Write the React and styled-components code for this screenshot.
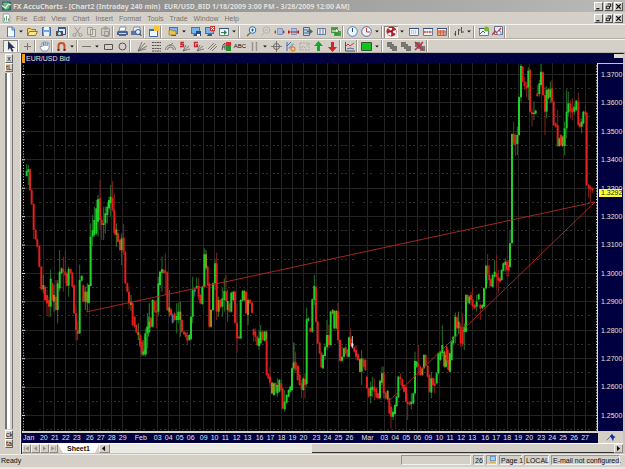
import styled, { createGlobalStyle } from "styled-components";

const GlobalStyle = createGlobalStyle`
    * {
        box-sizing: border-box;
    }
    body {
        margin: 0;
        background-color: #d4d0c8;
        font-family: "Liberation Sans", Arial, sans-serif;
        font-size: 7px;
        line-height: 9px;
        color: #111;
    }
    button {
        font: inherit;
        color: inherit;
        padding: 0;
        border: 0;
        background: none;
    }
`;

const Window = styled.div`
    display: flex;
    flex-direction: column;
    height: 100vh;
    overflow: hidden;
`;

const TitleBar = styled.header`
    display: flex;
    align-items: center;
    gap: 2px;
    height: 12px;
    padding: 0 2px;
    background: linear-gradient(90deg, #858585, #b9b9b7);
    color: #e2dfd8;
`;

const Title = styled.h1`
    flex: 1;
    margin: 0;
    font-family: "Noto Sans", "Liberation Sans", sans-serif;
    font-size: 7px;
    font-weight: bold;
    white-space: pre;
`;

const MenuBar = styled.nav`
    display: flex;
    align-items: center;
    height: 12px;
    padding: 0 2px;
    color: #77746e;
`;

const MenuItems = styled.div`
    display: flex;
    flex: 1;
    gap: 6px;
    padding-left: 5px;
`;

const WindowButtons = styled.div`
    display: flex;
    gap: 1px;
`;

const WindowButton = styled.button`
    width: 9px;
    height: 9px;
    background-color: #d4d0c8;
    border: 1px solid;
    border-color: #fff #555 #555 #fff;
    svg {
        display: block;
        width: 7px;
        height: 7px;
    }
`;

const ToolBar = styled.div`
    display: flex;
    align-items: center;
    height: ${({ $tall }) => ($tall ? "15px" : "14px")};
    padding-left: 3px;
    border-top: 1px solid #f7f5f0;
    border-bottom: 1px solid #b3afa7;
`;

const ToolButton = styled.button`
    display: flex;
    align-items: center;
    justify-content: center;
    flex: none;
    width: ${({ $narrow }) => ($narrow ? "8px" : "14px")};
    height: 12px;
    font-size: 6px;
    background-color: ${({ $pressed }) => ($pressed ? "#efede8" : "transparent")};
    box-shadow: ${({ $pressed }) =>
        $pressed ? "inset 1px 1px #8c8880, inset -1px -1px #fff" : "none"};
    svg {
        width: 11px;
        height: 11px;
    }
`;

const Separator = styled.span`
    flex: none;
    width: ${({ $wide }) => ($wide ? "6px" : "3px")};
    height: 12px;
    background: linear-gradient(90deg, #99958d 1px, #fff 1px, #fff 2px, transparent 2px);
`;

const Workspace = styled.div`
    display: flex;
    flex: 1;
    min-height: 0;
`;

const DockPanel = styled.aside`
    display: flex;
    flex-direction: column;
    width: 22px;
    padding: 1px 8px 6px 5px;
    border-right: 1px solid #222;
    box-shadow: inset -1px 0 #eeece8;
`;

const DockButton = styled.button`
    height: 9px;
    overflow: hidden;
    line-height: 7px;
    background-color: #d4d0c8;
    border: 1px solid;
    border-color: #fff #666 #666 #fff;
`;

const DockList = styled.div`
    flex: 1;
    margin: 1px 0;
    background-color: #d4d0c8;
    border-left: 2px solid #77747a;
    border-right: 1px solid #77747a;
    box-shadow: inset 3px 0 #fff;
`;

const ChartFrame = styled.main`
    display: flex;
    flex-direction: column;
    flex: 1;
    min-width: 0;
    border-right: 2px solid #c9c5be;
    border-top: 1px solid #111;
`;

const ChartHeader = styled.div`
    display: flex;
    justify-content: space-between;
    height: 9px;
    background-color: #000040;
    color: #e8e6c8;
`;

const ChartName = styled.span`
    padding-left: 1px;
    border-left: 3px solid #f0a020;
`;

const HeaderGrip = styled.span`
    width: 9px;
    height: 4px;
    background-color: #dcd9d2;
`;

const PlotRow = styled.div`
    display: flex;
    flex: 1;
    min-height: 0;
    background-color: #000;
`;

const Plot = styled.svg`
    display: block;
    flex: 1;
    min-width: 0;
    height: 100%;
`;

const PriceAxis = styled.div`
    position: relative;
    display: flex;
    flex-direction: column;
    justify-content: space-between;
    width: 25px;
    padding: 6px 1px 11px 3px;
    background-color: #000040;
    border-top: 1px solid #c8c8a8;
    color: #e4e4d0;
`;

const LastPrice = styled.strong`
    position: absolute;
    top: 34%;
    left: 1px;
    right: 1px;
    padding-left: 2px;
    background-color: #ffff30;
    color: #222;
    line-height: 8px;
    font-weight: normal;
`;

const DateRow = styled.div`
    display: flex;
    height: 12px;
    border-top: 2px solid #d4d0c8;
`;

const DateAxis = styled.div`
    display: flex;
    flex: 1;
    background-color: #000040;
    color: #e4e4e0;
    line-height: 10px;
    padding-left: 1px;
`;

const DateLabel = styled.span`
    flex: ${({ $span }) => $span} 1 0;
    min-width: 0;
    white-space: nowrap;
`;

const AxisCorner = styled.div`
    display: flex;
    justify-content: center;
    width: 25px;
    background-color: #d4d0c8;
`;

const SheetRow = styled.div`
    display: flex;
    height: 11px;
    border-top: 1px solid #fff;
    border-bottom: 1px solid #c4c0b8;
`;

const SheetNav = styled.button`
    width: ${({ $wide }) => ($wide ? "11px" : "9px")};
    background-color: #d4d0c8;
    border: 1px solid;
    border-color: #f2f0ec #8c8880 #8c8880 #f2f0ec;
    svg {
        display: block;
        width: 7px;
        height: 7px;
    }
`;

const SheetTab = styled.button`
    width: 41px;
    background-color: #fff;
    clip-path: polygon(0 0, 100% 0, 90% 100%, 12% 100%);
    font-size: 7px;
    font-weight: bold;
`;

const ScrollTrack = styled.div`
    display: flex;
    flex: 1;
    background-color: #ebe9e4;
`;

const ScrollThumb = styled.div`
    width: 60%;
    margin-left: auto;
    background-color: #d4d0c8;
    border-bottom: 1px solid #333;
`;

const StatusBar = styled.footer`
    display: flex;
    align-items: center;
    gap: 2px;
    height: 15px;
    padding: 0 5px 2px 1px;
    border-top: 1px solid #eeece6;
    border-bottom: 2px solid #e9e7e2;
`;

const StatusText = styled.span`
    flex: 1;
`;

const StatusCell = styled.span`
    flex: none;
    width: ${({ $width }) => $width};
    height: 10px;
    padding-left: 1px;
    border: 1px solid;
    border-color: #97938b #f4f2ee #f4f2ee #97938b;
    line-height: 9px;
    white-space: nowrap;
    svg {
        display: block;
        width: 9px;
        height: 8px;
    }
`;

const monitor = (
    <>
        <path d="M1 1h9v7H1z" fill="#3c78c8" />
        <path d="M2 2h7v5H2z" fill="#78b4ec" />
        <path d="M4 8h4v2H3z" fill="#44546c" />
    </>
);

const sheetFrame = (
    <>
        <path d="M1.500 2.500h9v7h-9z" fill="#eef2f6" stroke="#6c7c98" />
        <path d="M1 2h10v1H1z" fill="#345488" />
    </>
);

const candleFrame = (
    <path d="M3.500 2.500h5v6h-5zM5 2v7M7 2v7" fill="#d5e4f6" stroke="#7087b4" strokeWidth=".8" />
);

const stacked = <path d="M1 1h5v2h2v2h3v5H6V8H4V6H1z" fill="#77756f" />;

const icons = {
    newFile: (
        <path d="M2.500 1h5l2 2v8h-7zM7 1v3h3" fill="#f4faff" stroke="#527ab4" />
    ),
    arrow: <path d="M3 4h5L5.500 7z" fill="#111" />,
    open: (
        <>
            <path d="M.5 9.500v-7h3l1 1h4v2" fill="#f4d56c" stroke="#9a7425" />
            <path d="M.5 9.500l2-4h8l-2 4z" fill="#ffe58d" stroke="#9a7425" />
        </>
    ),
    save: (
        <>
            <path d="M1.500 1.500h8v8h-8z" fill="#7ba5de" stroke="#3e68ac" />
            <path d="M3 1h5v3H3zM3 6h5v4H3z" fill="#e8f0fa" />
        </>
    ),
    capture: (
        <>
            <path d="M3.500 1.500h7v7h-7z" fill="#dce8f6" stroke="#285088" />
            <path d="M1 5h7v5H1z" fill="#4a5260" />
            <circle cx="4.500" cy="7.500" r="1.500" fill="#d6e3ee" />
            <path d="M3 1h8v2H3z" fill="#345c98" />
        </>
    ),
    cut: (
        <g fill="none" stroke="#9a978f">
            <path d="M2.500 1l5 7M8.500 1l-5 7" />
            <circle cx="2.500" cy="9" r="1.500" />
            <circle cx="8.500" cy="9" r="1.500" />
        </g>
    ),
    copy: <path d="M1.500 1.500h5v7h-5zM4.500 3.500h5v7h-5z" fill="#dcd9d2" stroke="#a09d95" />,
    paste: (
        <path d="M1.500 2.500h8v7h-8zM4 1h3v2H4zM4.500 5.500h4v5h-4z" fill="#ccc9c2" stroke="#9d9a92" />
    ),
    print: (
        <>
            <path d="M3 1h6L8 5H2z" fill="#fff" stroke="#566a94" strokeWidth=".7" />
            <path d="M1 5h9l1 1v3H9v1H2V9H0V6z" fill="#48649a" />
            <path d="M2 7h7v1H2z" fill="#c5d3ea" />
        </>
    ),
    preview: (
        <>
            <path d="M3 1h6v4H2z" fill="#eef2fa" stroke="#566a94" strokeWidth=".7" />
            <path d="M0 5h10v4H0z" fill="#5a76a8" />
            <circle cx="7" cy="6" r="2.500" fill="#e3eefb" stroke="#3c5488" />
            <path d="M8.500 8l2 2" stroke="#333" />
        </>
    ),
    desk: (
        <>
            <path d="M1.500 3.500h8v7h-8z" fill="#f0f5fb" stroke="#3f6eae" />
            <path d="M1 3h9v2H1z" fill="#3f6eae" />
            <path d="M6 0h5v5H6z" fill="#f8c53f" />
        </>
    ),
    screenOpen: (
        <>
            {monitor}
            <path d="M1 4h3l1 1h3v4H1z" fill="#f0c349" stroke="#8c6a20" strokeWidth=".6" />
        </>
    ),
    screenSave: (
        <>
            {monitor}
            <path d="M6 5h5v5H6z" fill="#234b94" />
            <path d="M7 8h3v2H7z" fill="#fff" />
        </>
    ),
    screenClose: (
        <>
            {monitor}
            <path d="M6 0h5v5H6z" fill="#c83434" />
            <path d="M7 1l3 3M10 1l-3 3" stroke="#fff" />
        </>
    ),
    screenNext: (
        <>
            {sheetFrame}
            <path d="M3 6h3V4l3 2.500L6 9V7H3z" fill="#2f7d4b" />
        </>
    ),
    zoomIn: (
        <>
            <path d="M4 7L1 10" stroke="#8c6a2a" strokeWidth="1.500" />
            <circle cx="6.500" cy="4" r="3.300" fill="#e3f4ff" stroke="#3a6ca4" />
            <path d="M5 4h3M6.500 2.500v3" stroke="#2a5ea4" />
        </>
    ),
    zoomOut: (
        <g fill="none" stroke="#b5b2aa">
            <path d="M4 7L1 10M5 4h3" />
            <circle cx="6.500" cy="4" r="3.300" />
        </g>
    ),
    spread: (
        <>
            {candleFrame}
            <path d="M0 6l2-2v4zM11 6L9 4v4z" fill="#c42c36" />
        </>
    ),
    squeeze: (
        <>
            {candleFrame}
            <path d="M3 6L0 4v4zM8 6l3-2v4z" fill="#b5242c" />
            <path d="M3 6h5" stroke="#b5242c" />
        </>
    ),
    shift: (
        <>
            <path d="M1.500 1.500h6v8h-6zM1 4h7M1 7h7" fill="#c5d3e8" stroke="#4e6894" />
            <path d="M5 5h3V3l3 2.500L8 8V6H5z" fill="#3f7350" />
        </>
    ),
    bars: <path d="M1.500 2.500h8v6h-8zM4 2v7M7 2v7" fill="#e8edf4" stroke="#667ba0" />,
    reload: (
        <>
            <path d="M1 1h7v6H1zM4 5h7v5H4z" fill="#45a63f" />
            <path d="M2 4h4V2l3 3-3 2V6H2M5 8h4" fill="#e5f5d6" stroke="#257126" strokeWidth=".6" />
        </>
    ),
    clock: (
        <>
            <circle cx="5.500" cy="5.500" r="4.800" fill="#eef7ff" stroke="#5a7fb5" />
            <path d="M5.500 2v4" stroke="#264a8c" />
        </>
    ),
    clockRed: (
        <>
            <circle cx="5.500" cy="5.500" r="4.800" fill="#eef2fb" stroke="#5a6b98" />
            <path d="M5.500 2v4H9" fill="none" stroke="#c04040" />
        </>
    ),
    radiation: (
        <>
            <circle cx="5.500" cy="5.500" r="5" fill="#b8222c" />
            <path d="M5.500 5.500L2 2h4zM5.500 5.500L10 4v4zM5.500 5.500L5 10 1 8z" fill="#fff" />
            <circle cx="5.500" cy="5.500" r="1.300" fill="#701018" />
        </>
    ),
    grid: (
        <>
            {sheetFrame}
            <path d="M3 5h6M3 7h6" stroke="#97a0ac" strokeDasharray="1" />
        </>
    ),
    gridRow: (
        <>
            {sheetFrame}
            <path d="M2 6h8" stroke="#d67054" strokeWidth="2" strokeDasharray="2 .5" />
        </>
    ),
    gridFull: (
        <>
            {sheetFrame}
            <path d="M2 4h8v5H2z" fill="#ef9978" />
            <path d="M2 6h8M4.500 4v5M7.500 4v5" stroke="#bb5a44" strokeWidth=".7" />
        </>
    ),
    ohlc: (
        <path d="M2.500 5v5M1 8h2M5.500 3v6M5.500 4h2M8.500 1v6M8 6h3" fill="none" stroke="#4d554d" />
    ),
    alert: (
        <>
            {sheetFrame}
            <path d="M2 8l3-3 2 2" fill="none" stroke="#49618c" />
            <circle cx="8.500" cy="3" r="2.500" fill="#78b82c" />
        </>
    ),
    study: (
        <>
            <path d="M2.500.500h8v8h-8z" fill="#e2e8f3" stroke="#647395" />
            <path d="M0 9l3-4 2 2 4-5" fill="none" stroke="#ca3838" strokeWidth="1.300" />
            <circle cx="7" cy="7" r="2" fill="#f4f7fd" stroke="#5b70a0" strokeWidth=".7" />
        </>
    ),
    pointer: <path d="M3 0v9l2-2 2 4 1.500-1L7 7h3z" fill="#283858" />,
    cross: <path d="M5.500 2v7M2 5.500h7" stroke="#77756e" />,
    hand: (
        <path
            d="M3 10L1 6l1-1 1 1V2h1.500v3V1H6v4l.5-4H8v4l.5-3H10v5L8 10z"
            fill="#fff"
            stroke="#7387a8"
            strokeWidth=".8"
        />
    ),
    magnet: (
        <>
            <path d="M2.500 9V5a3 3 0 016 0v4" fill="none" stroke="#cf4b28" strokeWidth="2" />
            <path d="M1.500 8h2v2h-2zM7.500 8h2v2h-2z" fill="#343434" />
        </>
    ),
    line: <path d="M1 5.500h9" stroke="#77756e" />,
    rect: <path d="M1.500 3.500h8v5h-8z" fill="none" stroke="#55534e" />,
    circle: <circle cx="5.500" cy="5.500" r="3.500" fill="none" stroke="#55534e" />,
    fan: <path d="M1 10L5 1M1 10l7-8M1 10l9-5M1 10l8-2" stroke="#66645e" strokeWidth=".8" />,
    levels: <path d="M1 1.500h9M1 4.500h9M1 7.500h9M1 10h9" stroke="#55534e" strokeDasharray="2 .5" />,
    arcs: (
        <path
            d="M.5 9a5 5 0 0110 0M2.500 9a3 3 0 016 0M4 5L8 2"
            fill="none"
            stroke="#66645e"
            strokeWidth=".8"
        />
    ),
    speed: (
        <>
            <path d="M4 10l3-6M4 10l6-5M4 10l7-2" stroke="#66645e" strokeWidth=".8" />
            <path d="M5 1.500H2v2h2.500v2H1" fill="none" stroke="#c92430" strokeWidth="1.300" />
        </>
    ),
    gann: (
        <>
            <path d="M4 10l3-6M4 10l6-5M4 10l7-2" stroke="#66645e" strokeWidth=".8" />
            <path d="M5 1.500H1.500v4h3V4H3" fill="none" stroke="#c92430" strokeWidth="1.300" />
        </>
    ),
    parallel: <path d="M1 8l6-6M3 9l6-6M5 10l5-5" stroke="#66645e" strokeWidth=".8" />,
    paint: (
        <>
            <path d="M5 1h5v4H5z" fill="#d52c2c" />
            <path d="M5 5h5v5H5z" fill="#2e8e38" />
            <path d="M1 9l1-5 2-2v7M2 6h2" fill="none" stroke="#555" />
        </>
    ),
    pause: <path d="M3.500 1v9M7.500 1v9" stroke="#98958e" strokeWidth="1.500" />,
    target: (
        <>
            <circle cx="5.500" cy="5.500" r="3" fill="none" stroke="#66645e" />
            <path d="M5.500 0v11M0 5.500h11" stroke="#66645e" strokeWidth=".8" />
        </>
    ),
    edit: (
        <>
            <path d="M2 1v9M2 5l4-4" stroke="#4466a0" />
            <path d="M3 7l5-5 1 1-4 5z" fill="#84a0d0" />
            <circle cx="8" cy="8" r="2" fill="none" stroke="#e58b2e" strokeWidth="1.300" />
        </>
    ),
    ghost: <path d="M1 2h9v7H1zM1 9l3-4 2 2 4-5" fill="none" stroke="#aaa79f" strokeDasharray="2 1" />,
    up: <path d="M5.500 0L10 5H7v5H4V5H1z" fill="#17a82a" />,
    down: <path d="M5.500 11L1 6h3V1h3v5h3z" fill="#d6202a" />,
    chart: (
        <>
            <path d="M1.500 1v9H11" fill="none" stroke="#55534e" />
            <path d="M2 5l2-2 2 2 4-3" fill="none" stroke="#c43b3b" />
            <path d="M3 8l3-1 4 1" fill="none" stroke="#466aa0" />
        </>
    ),
    green: <path d="M.5 1.500h10v8H.5z" fill="#12c41c" stroke="#34593a" />,
    stack: stacked,
    stackDelete: (
        <>
            {stacked}
            <path d="M1 1l8 8M9 1L1 9" stroke="#c42a4a" strokeWidth="1.600" />
        </>
    ),
    minimize: <path d="M2 8h5v2H2z" fill="#111" />,
    restore: <path d="M4 1.500h5v4H7M2 5h5v4H2z" fill="none" stroke="#111" strokeWidth="1.500" />,
    close: <path d="M2 2l7 7M9 2L2 9" stroke="#111" strokeWidth="1.800" />,
    first: <path d="M2 2h1v7H2zM9 2v7L4 5.500z" fill="#918e87" />,
    prev: <path d="M8 2v7L3 5.500z" fill="#918e87" />,
    next: <path d="M3 2v7l5-3.500z" fill="#918e87" />,
    last: <path d="M8 2h1v7H8zM2 2v7l5-3.500z" fill="#918e87" />,
    left: <path d="M8 1v9L3 5.500z" fill="#111" />,
    right: <path d="M3 1v9l5-4.500z" fill="#111" />,
    logo: (
        <>
            <path d="M0 0h11v11H0z" fill="#306a74" />
            <path d="M1 2l4-1 5 3-2 5-4 1z" fill="#6cc07c" />
            <path d="M0 5l4 3 4-5 3 1" fill="none" stroke="#e8f5dc" strokeWidth="1.500" />
        </>
    ),
    page: (
        <>
            <path d="M1.500.500h6l2 2v8h-8z" fill="#fff" stroke="#83919d" />
            <path d="M3 9V5M5.500 9V3M8 9V6" stroke="#3d8c55" />
        </>
    ),
    computer: (
        <>
            <path d="M2.500.500h7v6h-7z" fill="#9fd4f4" stroke="#4478b4" />
            <path d="M1 8h9v2H1z" fill="#e0b458" />
        </>
    ),
    pin: (
        <>
            <path d="M0 9l5-5" stroke="#55534e" />
            <path d="M4 4l3-3 1 2 3 2-2 1-1 4-2-4z" fill="#1b2d98" />
        </>
    ),
};

function Icon({ name }) {
    return (
        <svg viewBox='0 0 11 11' aria-hidden='true'>
            {icons[name]}
        </svg>
    );
}

// "|" is a separator, "||" a band grip, "!" marks a pressed button
const standardTools =
    "newFile arrow open save capture | cut copy paste | print preview | desk || screenOpen arrow screenSave screenClose screenNext arrow || zoomIn zoomOut spread squeeze shift bars reload | clock clockRed arrow | !radiation arrow grid gridRow gridFull | ohlc arrow | alert study |".split(
        " "
    );
const drawingTools =
    "!pointer | cross | hand | magnet arrow | line arrow rect circle || fan levels arcs speed gann parallel paint ABC pause arrow target edit ghost up down | chart | green arrow | stack stack stackDelete |".split(
        " "
    );

function Tools({ items, label, tall }) {
    return (
        <ToolBar role='toolbar' aria-label={label} $tall={tall}>
            {items.map((item, i) => {
                if (item[0] === "|") return <Separator key={i} $wide={item === "||"} />;
                const name = item.replace("!", "");
                return (
                    <ToolButton
                        key={i}
                        aria-label={name}
                        $narrow={name === "arrow"}
                        $pressed={item[0] === "!"}
                    >
                        {name === "ABC" ? "ABC" : <Icon name={name} />}
                    </ToolButton>
                );
            })}
        </ToolBar>
    );
}

function Controls() {
    return (
        <WindowButtons>
            {["minimize", "restore", "close"].map((name) => (
                <WindowButton key={name} aria-label={name}>
                    <Icon name={name} />
                </WindowButton>
            ))}
        </WindowButtons>
    );
}

// label, x of its grid line
const days = [
    ["Jan", 28], ["20", 43], ["21", 54], ["22", 65], ["23", 76], ["26", 89],
    ["27", 100], ["28", 111], ["29", 122], ["Feb", 140], ["03", 157], ["04", 168],
    ["05", 179], ["06", 190], ["09", 203], ["10", 214], ["11", 225], ["12", 236],
    ["13", 247], ["16", 259], ["17", 270], ["18", 281], ["19", 292], ["20", 303],
    ["23", 316], ["24", 327], ["25", 338], ["26", 349], ["Mar", 367], ["03", 384],
    ["04", 395], ["05", 406], ["06", 417], ["09", 428], ["10", 439], ["11", 450],
    ["12", 461], ["13", 472], ["16", 485], ["17", 496], ["18", 507], ["19", 518],
    ["20", 529], ["23", 541], ["24", 552], ["25", 563], ["26", 574], ["27", 585],
];

const labelStart = ([label, x]) => x - (label.length > 2 ? 6 : 4);

const prices = Array.from({ length: 13 }, (_, i) => (1.37 - i / 100).toFixed(4));

// Each block has its own origin and a scale of three units to the pixel.
// A bar is: direction, x, body top, body bottom, then high and low if they are far out.
const blocks = [
    {
        x: 0,
        y: 140,
        bars: `g 80 93 108 72 110,g 85 88 96 75 135,r 90 88 150,r 95 150 192,r 101 192 270 190 297,r 107 270 298,
        r 112 298 320,r 118 318 380,r 124 380 448,o 130 435 448 405 460,r 135 440 480,r 141 465 490 450 525,
        r 147 480 500 470 532,g 152 416 500 388 530,r 157 430 480,o 162 465 485 435 515,r 168 470 510 420 512,
        g 173 430 510 420 550,g 179 395 445 330 455,g 185 385 400,r 190 388 396 350 455,r 196 395 407 333 430,
        r 201 400 437,g 206 387 437 380 470,r 212 388 400,r 217 398 440,r 222 436 520,r 228 520 570 500 602,
        r 233 570 582 545 600,g 239 420 580 374 582,g 245 408 422,r 250 436 485,o 256 455 485 440 510,
        o 262 455 488 430 515,g 267 435 488,g 272 290 438 250 440,g 278 270 290 225 320,g 283 240 285 200 290,
        g 289 205 280 180 285,g 294 178 245 165 290,r 300 175 240 120 270,r 305 240 255 230 300,
        g 311 250 255 200 300,g 316 220 250 200 280,g 322 200 225 185 250,g 327 180 205 170 210,
        g 332 170 190 135 230,r 338 173 210 123 215,r 343 210 280 160 285,o 349 268 285 250 320,
        r 354 280 305,r 360 300 330,g 365 295 330 280 375,r 371 293 335 252 345,r 376 335 430,
        r 382 430 455,r 387 455 490 440 508,o 393 485 495 465 512,r 398 490 555,r 404 530 560,
        r 409 555 577,o 415 577 585 550 600,r 421 585 620,r 426 605 643 600 650,g 432 630 643,g 437 590 643,
        g 443 560 590 520 625,g 448 530 575 490 580`,
    },
    {
        x: 140,
        y: 220,
        bars: `r 0 355 375,r 5 375 403,g 10 395 403 360 408,g 16 340 403 325 410,g 22 320 340 280 375,g 28 305 325 250 330,
        r 33 295 320,g 38 240 320,r 44 243 275,r 49 272 278 240 325,g 55 190 275 170 290,g 60 155 195,
        g 66 148 158 110 215,r 71 150 158,r 76 152 160 100 225,r 82 157 270,o 88 262 275 210 290,r 93 268 285,
        b 98 285 308 280 310,r 104 280 300,g 110 288 300 250 340,g 115 275 300 248 310,o 121 275 300 245 350,
        r 126 300 335,r 132 335 342,r 137 338 350,r 142 345 362 335 375,g 148 345 360,g 153 290 358,
        g 158 210 290 170 310,b 164 208 215 205 230,g 170 198 205 172 205,r 176 198 230 175 240,r 181 225 250,
        g 187 200 252,g 193 103 200 85 205,o 198 103 145 90 150,r 203 140 195,r 208 190 320,o 213 270 320,
        g 219 190 270,g 225 130 190 115 210,r 230 130 275 98 300,o 236 240 275 230 290,r 241 240 262,g 247 235 260 205 290,
        g 253 213 240 175 275,r 258 215 243 165 245,g 263 243 270 210 305,r 268 250 275,g 274 218 275,g 280 215 240,
        r 285 215 308,r 291 308 355 250 398,r 297 350 355,g 302 240 355,g 308 213 242,o 313 213 240,
        r 318 215 280,o 324 240 285 235 315,r 330 240 250,r 336 248 278,r 341 328 345 325 365,r 346 335 350 325 365,
        r 352 350 375,g 357 355 378 330 390,g 362 335 370 315 375,r 368 335 360,g 374 335 362,o 379 335 362,
        r 380 362 465,r 385 462 475,r 390 470 488 440 500,o 396 488 520,g 402 490 525,r 407 490 515,
        g 412 495 520 475 530,g 418 480 515,r 424 490 510 475 515,r 428 505 565,g 434 545 568 510 575,g 440 525 548,
        g 446 510 530,g 451 500 515,g 456 445 510,g 462 425 440 368 460,r 467 428 450 400 455,r 473 445 480`,
    },
    {
        x: 290,
        y: 260,
        bars: `g 11 308 325 248 330,r 16 308 325 275 330,r 24 318 345,r 29 345 375,r 35 370 388 360 415,g 40 355 390,
        r 45 357 375 340 415,g 50 178 372 142 380,g 55 175 182,r 61 205 215,g 67 118 215,g 73 78 120 45 135,
        r 78 80 185,r 83 185 250,r 89 248 280,r 94 278 322,g 99 285 325,g 105 260 288 250 300,g 111 225 262 180 270,
        r 117 225 255 195 265,g 122 155 255,o 128 150 160,g 133 153 205,o 139 153 205,r 144 153 240 128 250,
        r 150 240 302,g 156 290 302 260 305,g 162 265 290,r 167 262 280,r 172 270 290,g 177 232 290,r 182 235 255 205 260,
        w 187 250 260 228 265,r 193 262 275,r 198 270 290 255 300,r 204 283 300,o 210 298 335,g 215 295 335 270 375,
        r 221 298 320,r 226 300 330,r 231 350 385,r 236 385 410,g 242 382 408 365 430,g 247 380 390 350 410,
        r 253 380 395 355 420,r 259 385 412,r 264 400 415,g 270 362 415,g 276 340 368 320 375,r 281 338 400 320 415,
        r 287 398 415,o 293 393 418,r 298 415 460,r 303 440 470 430 505,g 309 455 470 445 480,g 315 435 462,
        g 320 410 438,g 325 350 412,r 331 350 358 340 375,r 337 358 380,r 342 375 395,r 348 380 425,
        r 353 425 432 400 480,r 359 428 434,g 364 425 432 400 448,g 370 400 430,g 375 303 400 275 405,g 380 305 320,
        r 385 310 320 255 345,r 391 320 345,o 397 325 345,g 402 285 325,r 407 285 318,r 413 318 350,
        r 418 345 395,g 424 355 398 335 415,r 429 355 375,r 434 370 378 355 400,g 440 340 370,g 445 280 340,
        g 451 275 300,g 457 255 280 195 290,o 463 275 320,g 468 285 320,r 473 270 310`,
    },
    {
        x: 430,
        y: 180,
        bars: `r 50 500 538,r 55 540 570,g 60 520 575,g 65 485 540,g 70 470 490,g 76 410 470 398 490,r 81 412 445,o 86 425 445 395 460,
        r 92 440 490 430 500,r 98 450 493 400 500,g 103 440 455 430 510,g 108 345 455,r 113 345 368,g 118 350 370,
        r 123 345 360 335 375,r 128 358 380 320 390,r 134 375 385,g 140 365 380 345 395,g 146 343 358,r 151 375 385 370 420,
        g 157 375 385,g 162 325 380,g 168 257 325,r 173 257 285 222 310,r 178 285 300 255 320,r 183 298 318,
        g 188 285 320,g 194 275 290 240 295,r 200 280 292 225 325,r 205 292 302 270 340,r 210 295 305,g 215 270 300,
        g 220 250 272,g 226 245 255 235 275,r 231 245 270 240 290,r 236 255 272 240 290,g 240 190 260 150 265,g 246 -138 190 -140 190`,
    },
    {
        x: 430,
        y: 60,
        bars: `r 251 222 250 185 255,r 256 225 255 220 288,g 262 225 252 200 285,g 267 112 225,g 273 18 112 12 125,r 278 20 65,
        r 284 65 78 50 90,r 290 78 85 65 112,g 295 32 82 22 120,r 300 30 155,r 306 155 162 145 200,g 312 158 162 125 180,
        g 317 152 160,r 322 100 108 75 110,g 328 70 102 60 110,g 333 35 75 12 80,r 339 37 105,r 345 105 155 80 225,
        g 350 90 155 80 175,o 355 88 115,g 361 88 112 65 130,r 366 85 125 60 130,r 371 125 195,r 377 190 200,
        r 383 195 258 150 260,g 388 235 258,r 393 225 255,o 398 230 258,g 404 205 258 185 285,g 410 155 205 88 235,
        g 415 130 157 95 170,r 421 130 155 120 175,r 427 145 158 115 180,g 433 140 155 130 165,g 439 122 150,
        r 445 125 195 98 200,r 450 190 200 175 205,g 455 185 200 175 220,g 460 155 190,r 466 155 162 138 170,
        r 470 158 375,r 476 375 385 372 415,r 481 380 388 375 425,r 487 385 392 382 400`,
    },
];

const barColors = { g: "#20cf28", r: "#e21f1b", o: "#9d8a18", b: "#527aa4", w: "#e8e8e8" };
const wickColors = { g: "#23702a", r: "#87201e", o: "#4e7424", b: "#416185", w: "#d0d0d0" };

function Bar({ row }) {
    const [kind, ...rest] = row.trim().split(" ");
    const [x, top, bottom, high = top - 3, low = bottom + 3] = rest.map(Number);
    return (
        <>
            <path d={`M${x} ${high}V${low}`} stroke={wickColors[kind]} strokeWidth='3' />
            <path d={`M${x} ${top}V${bottom}`} stroke={barColors[kind]} strokeWidth='6' />
        </>
    );
}

function PricePlot() {
    const levels = prices.map((_, i) => 74.500 + i * 28.417);
    const ticks = Array.from({ length: 129 }, (_, i) => 66 + i * 2.842);
    return (
        <Plot viewBox='22 63 576 368' preserveAspectRatio='none' role='img' aria-label='EUR/USD Bid'>
            <g fill='none' stroke='#242424' shapeRendering='crispEdges'>
                {days.slice(1).map(([, x]) => (
                    <path key={x} d={`M${x}.5 63V431`} />
                ))}
                {levels.map((y) => (
                    <path key={y} d={`M22 ${y}H598`} />
                ))}
                {levels.map((y) =>
                    days.slice(1).map(([, x]) => (
                        <path key={x} d={`M${x - 4} ${y + 14}h2m5 0h2`} stroke='#303030' />
                    ))
                )}
            </g>
            <g stroke='#dcdcd0'>
                {ticks.map((y, i) => (
                    <path key={y} d={`M${i % 10 === 3 ? 22 : 23} ${y}h${i % 10 === 3 ? 3 : 1}M596 ${y}h2`} />
                ))}
                <path d='M597.500 63V431' />
            </g>
            {blocks.map(({ x, y, bars }) => (
                <g key={`${x}-${y}`} transform={`translate(${x} ${y}) scale(${1 / 3})`}>
                    {bars.split(",").map((row) => (
                        <Bar key={row} row={row} />
                    ))}
                </g>
            ))}
            <path d='M86 312L595 202L389 401' fill='none' stroke='#b52a24' strokeWidth='.9' />
        </Plot>
    );
}

const menus = [
    "File", "Edit", "View", "Chart", "Insert", "Format", "Tools", "Trade", "Window", "Help",
];

function App() {
    return (
        <Window>
            <GlobalStyle />
            <TitleBar>
                <svg width='9' height='10' viewBox='0 0 11 11'>{icons.logo}</svg>
                <Title>
                    {"FX AccuCharts - [Chart2 (Intraday 240 min)  EUR/USD_BID 1/18/2009 3:00 PM - 3/28/2009 12:00 AM]"}
                </Title>
                <Controls />
            </TitleBar>
            <MenuBar>
                <svg width='9' height='10' viewBox='0 0 11 11'>{icons.page}</svg>
                <MenuItems>
                    {menus.map((menu) => (
                        <button key={menu}>{menu}</button>
                    ))}
                </MenuItems>
                <Controls />
            </MenuBar>
            <Tools items={standardTools} label='Standard' tall />
            <Tools items={drawingTools} label='Drawing' />
            <Workspace>
                <DockPanel>
                    <DockButton aria-label='Close panel'>x</DockButton>
                    <DockButton>tL</DockButton>
                    <DockList />
                    <DockButton>ck</DockButton>
                    <DockButton>ta</DockButton>
                </DockPanel>
                <ChartFrame>
                    <ChartHeader>
                        <ChartName>EUR/USD Bid</ChartName>
                        <HeaderGrip />
                    </ChartHeader>
                    <PlotRow>
                        <PricePlot />
                        <PriceAxis>
                            {prices.map((price) => (
                                <span key={price}>{price}</span>
                            ))}
                            <LastPrice>1.3292</LastPrice>
                        </PriceAxis>
                    </PlotRow>
                    <DateRow>
                        <DateAxis>
                            {days.map((day, i) => (
                                <DateLabel
                                    key={day[1]}
                                    $span={(days[i + 1] ? labelStart(days[i + 1]) : 598) - labelStart(day)}
                                >
                                    {day[0]}
                                </DateLabel>
                            ))}
                        </DateAxis>
                        <AxisCorner>
                            <svg width='10' height='9' viewBox='0 0 11 11'>{icons.pin}</svg>
                        </AxisCorner>
                    </DateRow>
                    <SheetRow>
                        {["first", "prev", "next", "last"].map((name) => (
                            <SheetNav key={name} aria-label={name}>
                                <Icon name={name} />
                            </SheetNav>
                        ))}
                        <SheetTab>Sheet1</SheetTab>
                        <SheetNav $wide aria-label='Scroll left'>
                            <Icon name='left' />
                        </SheetNav>
                        <ScrollTrack>
                            <ScrollThumb />
                        </ScrollTrack>
                        <SheetNav aria-label='Scroll right'>
                            <Icon name='right' />
                        </SheetNav>
                    </SheetRow>
                </ChartFrame>
            </Workspace>
            <StatusBar>
                <StatusText>Ready</StatusText>
                <StatusCell $width='70px' />
                <StatusCell $width='11px'>26</StatusCell>
                <StatusCell $width='11px'>
                    <Icon name='computer' />
                </StatusCell>
                <StatusCell $width='23px'>Page 1</StatusCell>
                <StatusCell $width='25px'>LOCAL</StatusCell>
                <StatusCell $width='69px'>E-mail not configured.</StatusCell>
            </StatusBar>
        </Window>
    );
}

export default App;
